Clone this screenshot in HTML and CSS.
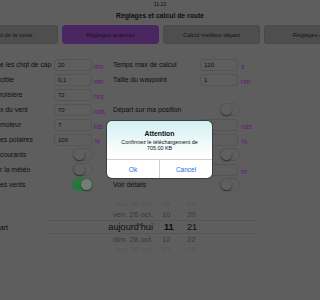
FILE: index.html
```html
<!DOCTYPE html>
<html lang="fr">

<head>
    <meta charset="UTF-8">
    <meta name="viewport" content="width=device-width, initial-scale=1.0">
    <title>Réglages et calcul de route</title>
    <link rel="stylesheet" href="styles.css">
</head>

<body>
    <div class="status">11:22</div>
    <h1 class="title">Réglages et calcul de route</h1>

    <nav class="tabs">
        <div class="tab">Calcul de la route</div>
        <div class="tab active">Réglages avancés</div>
        <div class="tab">Calcul meilleur départ</div>
        <div class="tab">Réglages carte</div>
    </nav>

    <div class="settings">
        <!-- left column (labels cut by the screen edge) -->
        <div class="col col-left">
            <div class="row"><span class="label">e les chgt de cap</span><div class="field">20</div><span class="unit">mn</span></div>
            <div class="row"><span class="label">cible</span><div class="field">0,1</div><span class="unit">nm</span></div>
            <div class="row"><span class="label">roisière</span><div class="field">72</div><span class="unit">hrs</span></div>
            <div class="row"><span class="label">x du vent</span><div class="field">70</div><span class="unit">nds</span></div>
            <div class="row"><span class="label">moteur</span><div class="field">7</div><span class="unit">kts</span></div>
            <div class="row"><span class="label">es polaires</span><div class="field">100</div><span class="unit">%</span></div>
            <div class="row"><span class="label">courants</span><div class="toggle"><span class="knob"></span></div></div>
            <div class="row"><span class="label">r la météo</span><div class="toggle"><span class="knob"></span></div></div>
            <div class="row"><span class="label">es vents</span><div class="toggle on"><span class="knob"></span></div></div>
        </div>

        <!-- right column, rows under the alert keep empty labels -->
        <div class="col col-right">
            <div class="row"><span class="label">Temps max de calcul</span><div class="field">120</div><span class="unit">s</span></div>
            <div class="row"><span class="label">Taille du waypoint</span><div class="field">1</div><span class="unit">nm</span></div>
            <div class="row"></div>
            <div class="row"><span class="label">Départ sur ma position</span><div class="toggle"><span class="knob"></span></div></div>
            <div class="row"><span class="label"></span><div class="field"></div><span class="unit">nds</span></div>
            <div class="row"><span class="label"></span><div class="field"></div><span class="unit">%</span></div>
            <div class="row"><span class="label"></span><div class="toggle"><span class="knob"></span></div></div>
            <div class="row"><span class="label"></span><div class="field"></div><span class="unit">m</span></div>
            <div class="row"><span class="label">Voir détails</span><div class="toggle"><span class="knob"></span></div></div>
        </div>
    </div>

    <div class="picker-row">
        <span class="picker-label">art</span>
        <div class="picker">
            <div class="p-row far"><span class="p-date">jeu. 25 oct.</span><span class="p-hour">09</span><span>19</span></div>
            <div class="p-row near"><span class="p-date">ven. 26 oct.</span><span class="p-hour">10</span><span>20</span></div>
            <div class="p-row current"><span class="p-date">aujourd'hui</span><span class="p-hour">11</span><span>21</span></div>
            <div class="p-row near"><span class="p-date">dim. 28 oct.</span><span class="p-hour">12</span><span>22</span></div>
            <div class="p-row far"><span class="p-date">lun. 29 oct.</span><span class="p-hour">13</span><span>23</span></div>
        </div>
    </div>

    <!-- Alert over the page -->
    <div class="alert">
        <div class="alert-body">
            <div class="alert-title">Attention</div>
            <div class="alert-msg">Confirmez le téléchargement de<br>705.00 KB</div>
        </div>
        <div class="alert-buttons">
            <button class="alert-btn">Ok</button>
            <button class="alert-btn">Cancel</button>
        </div>
    </div>
</body>

</html>
```

FILE: styles.css
```css
body,
html {
    margin: 0;
    padding: 0;
}

body {
    width: 320px;
    height: 300px;
    overflow: hidden;
    position: relative;
    background: #5e5e5e;
    color: #0e0e0e;
    font-family: "Liberation Sans", Arial, sans-serif;
}

.status {
    height: 9px;
    line-height: 9px;
    font-size: 5.2px;
    text-align: center;
}

.title {
    margin: 0;
    height: 14px;
    line-height: 14px;
    font-size: 6.8px;
    font-weight: bold;
    text-align: center;
}

.tabs {
    display: flex;
    gap: 4px;
    height: 19px;
    margin: 2px 0 0 -39px;
}

.tab {
    flex: 0 0 97px;
    display: flex;
    align-items: center;
    justify-content: center;
    border-radius: 4px;
    background: #4e4e4e;
    box-shadow: inset 0 0 0 1px #494949;
    font-size: 5.9px;
    color: #141414;
    white-space: nowrap;
}

.tab.active {
    background: #4b2762;
    box-shadow: none;
}

.settings {
    display: grid;
    grid-template-columns: 113px 1fr;
    margin-top: 13px;
}

.col {
    display: flex;
    flex-direction: column;
}

.row {
    display: grid;
    height: 15px;
    align-items: center;
}

.col-left .row {
    grid-template-columns: 54px 39px auto;
}

.col-right .row {
    grid-template-columns: 87px 40px auto;
}

.label {
    font-size: 6.8px;
    white-space: nowrap;
    overflow: hidden;
}

.field {
    width: 38px;
    height: 12px;
    box-sizing: border-box;
    border: 1px solid #545454;
    border-radius: 3px;
    padding-left: 3px;
    display: flex;
    align-items: center;
    font-size: 6px;
}

.unit {
    font-size: 6.8px;
    color: #61197a;
    padding: 3px 0 0 1px;
}

.toggle {
    justify-self: end;
    width: 21px;
    height: 13px;
    box-sizing: border-box;
    border: 1px solid #555;
    border-radius: 7px;
    display: flex;
    align-items: center;
    padding: 0 0.5px;
}

.knob {
    width: 11px;
    height: 11px;
    border-radius: 50%;
    background: #5f5f5f;
    box-shadow: 0 1px 1.5px rgba(0, 0, 0, 0.5);
}

.toggle.on {
    background: #28773a;
    border-color: #28773a;
    justify-content: flex-end;
}

.toggle.on .knob {
    background: #7a7a7a;
}

/* date picker */
.picker-row {
    display: flex;
    align-items: center;
    margin-top: 8px;
}

.picker-label {
    width: 48px;
    font-size: 6.8px;
}

.picker {
    width: 209px;
}

.p-row {
    display: grid;
    grid-template-columns: 105px 34px 1fr;
    align-items: center;
    box-sizing: border-box;
    white-space: nowrap;
}

.p-date {
    text-align: right;
}

.p-hour {
    padding-left: 9px;
}

.p-row.far {
    height: 9px;
    font-size: 7.5px;
    color: #545454;
    transform: scaleY(0.7);
}

.p-row.near {
    height: 11px;
    font-size: 7.8px;
    color: #3a3a3a;
}

.p-row.current {
    height: 14px;
    font-size: 9.2px;
    color: #0e0e0e;
    border-top: 1px solid #565656;
    border-bottom: 1px solid #565656;
}

.p-row.current .p-hour {
    padding-left: 11px;
    font-weight: bold;
}

/* alert popup */
.alert {
    position: absolute;
    left: 107px;
    top: 121px;
    width: 105px;
    height: 57px;
    border-radius: 5px;
    background: linear-gradient(#d2f0f3, #ffffff 60%);
    box-shadow: 0 0 0 1px rgba(0, 0, 0, 0.35);
    display: flex;
    flex-direction: column;
    overflow: hidden;
}

.alert-body {
    flex: 1;
    text-align: center;
    padding-top: 8px;
}

.alert-title {
    font-size: 6.8px;
    font-weight: bold;
    line-height: 9px;
}

.alert-msg {
    margin-top: 2px;
    font-size: 5.4px;
    line-height: 5.5px;
}

.alert-buttons {
    display: flex;
    height: 18px;
    border-top: 1px solid #cfcfcf;
}

.alert-btn {
    flex: 1;
    border: none;
    background: transparent;
    padding: 0;
    font-family: inherit;
    font-size: 6.5px;
    color: #1b6fe0;
}

.alert-btn + .alert-btn {
    border-left: 1px solid #cfcfcf;
}
```
